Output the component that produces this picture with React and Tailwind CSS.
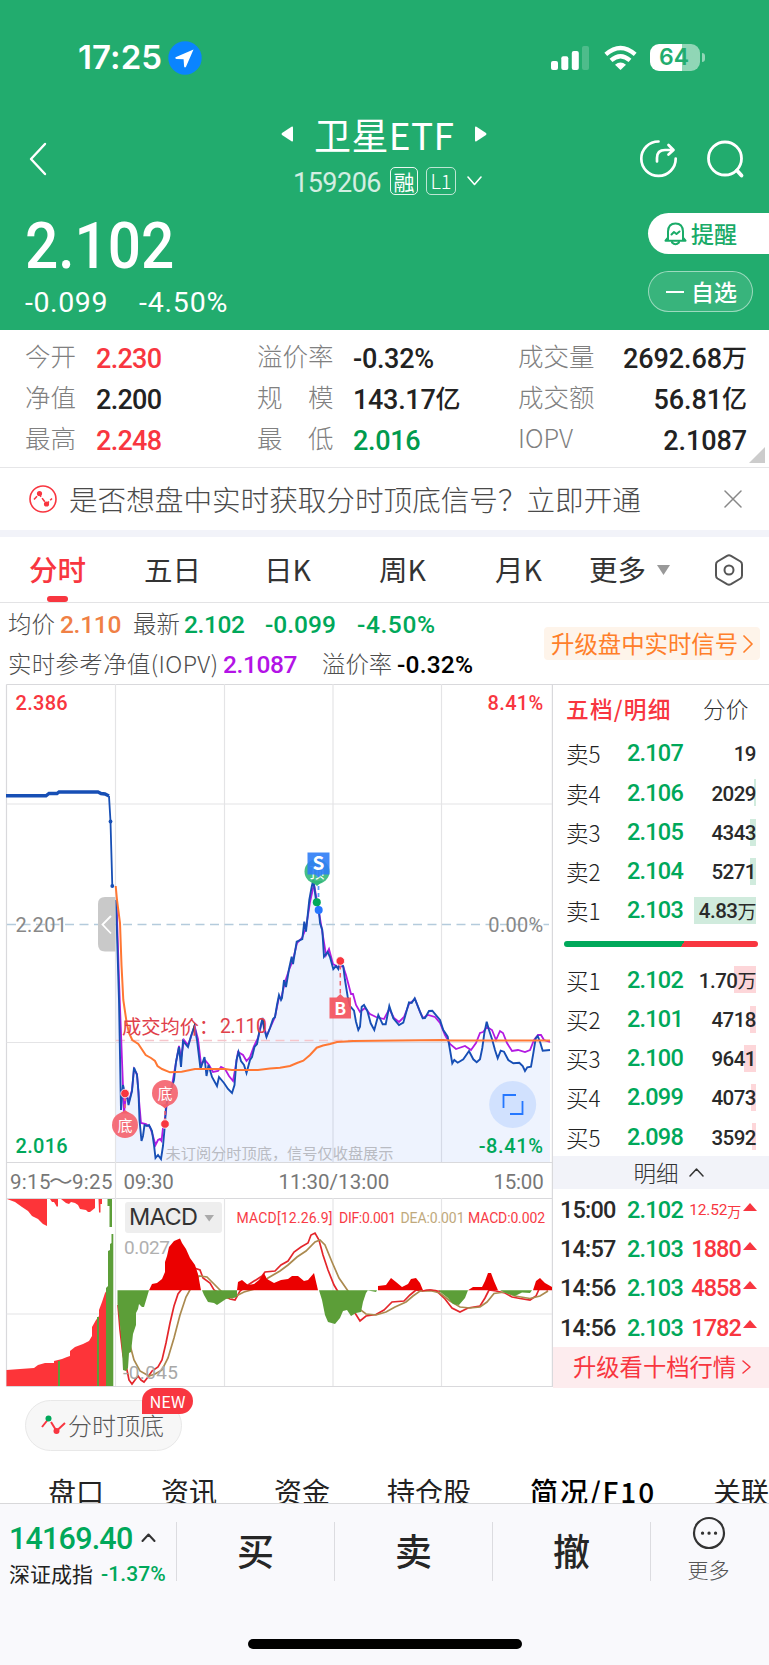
const stats = [
  ["今开", "2.230", "text-[#f83640]", "溢价率", "-0.32%", "text-[#222]", "成交量", "2692.68", "万"],
  ["净值", "2.200", "text-[#222]", "规　模", "143.17", "text-[#222]", "成交额", "56.81", "亿"],
  ["最高", "2.248", "text-[#f83640]", "最　低", "2.016", "text-[#009a4e]", "IOPV", "2.1087", ""],
];

const sells = [
  { label: "卖5", price: "2.107", vol: "19", bar: 0 },
  { label: "卖4", price: "2.106", vol: "2029", bar: 2.5 },
  { label: "卖3", price: "2.105", vol: "4343", bar: 6 },
  { label: "卖2", price: "2.104", vol: "5271", bar: 6.5 },
  { label: "卖1", price: "2.103", vol: "4.83", unit: "万", bar: 62 },
];

const buys = [
  { label: "买1", price: "2.102", vol: "1.70", unit: "万", bar: 22 },
  { label: "买2", price: "2.101", vol: "4718", bar: 6 },
  { label: "买3", price: "2.100", vol: "9641", bar: 12 },
  { label: "买4", price: "2.099", vol: "4073", bar: 5 },
  { label: "买5", price: "2.098", vol: "3592", bar: 4.5 },
];

const ticks = [
  ["15:00", "2.102", "12.52", "万"],
  ["14:57", "2.103", "1880", ""],
  ["14:56", "2.103", "4858", ""],
  ["14:56", "2.103", "1782", ""],
];

const PRICE =
  "123,1085 125,1093.5 127,1095 128.5,1105 132,1091 134,1067.5 137,1075 138.5,1092 139.5,1120 141.5,1141 143,1136 144.5,1125 147,1126 149,1125 152,1131 154,1145 155.5,1158 158,1155 161,1159 163,1146 165,1124 166,1106 168,1098 171,1090 174,1080 176,1062 179,1047 181,1067 183,1041 188,1047 191,1036 194.5,1026 197,1040 200.5,1069 204.5,1057 206.5,1076 208.5,1065 212,1077 217,1086 219,1077 224,1083 228,1089 232,1093 234.5,1085 236.5,1060 238.5,1052 241,1061 244,1065 246.5,1073 250,1060 252,1057 254.5,1047 257,1044 259.5,1031 262.5,1018 264,1028 266.5,1037 270,1028 273,1019 275,1017 277,1005 279,995 281,1000 282,998 284,980 286,987 289,969 291.7,956.7 293,964 296.7,941.7 302.3,939 304.3,921.7 306,931.7 309.3,900 311.7,886.7 313.3,880 316,900 318.7,908 320,923 322.3,930 324,956.7 327.7,952 330,957 333.3,969 336,966 338.3,969 340,961.7 343.3,966.7 345,980 347.7,996.7 350,1006 354,1010.7 356,1021.7 358.3,1030 360,1026.7 361.7,1006.7 364,1005 367.3,1010.7 370.7,1023.3 374.3,1030 378.3,1015 382.7,1024.3 385.7,1024.3 389.3,1006 393.3,1018.3 399,1025 403.3,1022.7 409,1002.3 411.7,1003 414.7,998.3 420,1011.7 422.7,1018.3 425,1018 429,1011 432.3,1010.7 440,1020 443.3,1030 447.7,1036.7 450,1050 452.3,1063.3 454.3,1060 457.7,1062.7 463.3,1059.3 469,1051 473.3,1059.3 476.7,1062.3 480,1059.3 482.3,1048 484.3,1033.3 486.7,1021.7 489,1030 492.3,1040 495,1050 497.7,1058.3 500.7,1050.7 504,1051.7 508.3,1060 513.3,1063.3 519.3,1062.7 522.7,1066 525,1071 527.3,1067.3 531,1066.7 533.3,1053.3 535.7,1038.3 537.7,1036 540,1041.7 542.7,1050.7 550,1050";

const IOPV =
  "116.5,900 119,980 122,1060 124,1113 126,1095 129,1101 132,1090 134,1069 137,1074 139,1100 141,1123 146,1124 150,1127 153,1136 155.5,1145 158,1140 160,1139 161.5,1141 163,1128 165,1118 168,1096 172,1085 175,1068 179,1046 181,1058 184,1040 188,1045 191,1037 194.5,1026 198,1039 201,1064 205,1060 209,1065 213,1072 218,1071 221,1067 225,1069 229,1076 233,1081 235,1070 238,1052 243,1055 246.5,1061 250,1057 254,1046 258,1038 262.5,1020 266.5,1036 271,1026 275,1017 279,997 281,999 285,982 289,970 293,960 297,943 302,938 306,928 310,902 314,884 318,907 322,930 326,955 329,949 333,964 338,967 343,966 346,975 351,994 353,994 356,1005 360,1012 365,1008 370,1014 376,1017 384,1019 389.3,1009 394,1018 399,1022 404,1017 409,1004 415,999 420,1012 423,1018 428,1015 435,1017 440,1023 445,1035 450,1044 456,1049 465,1046 471,1050 476,1043 480,1033 483,1032 487,1027 492,1030 496,1040 500,1031 503,1033 507,1043 512,1051 518,1050 525,1052 530,1050 534,1040 538,1035 541,1035 544,1040 550,1042";

const AVG =
  "115.7,886 117,900 120,923 121.5,965 123.3,1000 126.7,1023 129,1033 132.3,1040 138.3,1044 145.7,1055 151,1058 155,1061 157.5,1066 162,1069 170,1072.3 181.7,1071.7 195,1069 225,1069 232,1070 258,1070 270,1068.5 280,1067.7 290,1066 297,1063 303.3,1060.7 310,1055 316.7,1047.7 323,1045.5 330,1044 337,1042 353,1041 443,1040 450,1040.5 550,1040.5";

const Sans = "font-['Noto_Sans_CJK_SC',sans-serif]";

function Triangle({ className = "", d = "M0 0L12 8L0 16Z", w = 12, h = 16 }) {
  return (
    <svg className={className} width={w} height={h} viewBox={`0 0 ${w} ${h}`}>
      <path d={d} fill="currentColor" />
    </svg>
  );
}

function Chevron({ className = "", d, w, h, stroke = 1.8 }) {
  return (
    <svg className={className} width={w} height={h} viewBox={`0 0 ${w} ${h}`} fill="none" stroke="currentColor" strokeWidth={stroke}>
      <path d={d} strokeLinecap="round" strokeLinejoin="round" />
    </svg>
  );
}

function StatusBar() {
  return (
    <div className="flex h-[115px] items-center pl-[78px] pr-[64px]">
      <span className="w-[90px] font-['Inter'] text-[33px] font-semibold leading-none tracking-[0.1px]">17:25</span>
      <svg className="size-[34px]" viewBox="0 0 34 34">
        <circle cx="17" cy="17" r="16.7" fill="#0a84ff" />
        <path d="M25.5 8.5L7.5 16.2Q6.6 17.6 8.4 17.9L15.6 18.2L16.1 25.4Q16.8 27.2 18 25.8Z" fill="#fff" />
      </svg>
      <svg className="ml-auto" width="39" height="26" viewBox="0 0 39 26" fill="#fff">
        <rect x="0" y="16" width="7" height="9" rx="2" />
        <rect x="10.3" y="11.3" width="7" height="13.7" rx="2" />
        <rect x="20.8" y="6" width="7" height="19" rx="2" />
        <rect x="31" y="1" width="7" height="24" rx="2" opacity=".2" />
      </svg>
      <svg className="ml-[14px]" width="33" height="26" viewBox="0 0 33 26" fill="none" stroke="#fff" strokeWidth="4.3">
        <path d="M1.8 9.4Q16.500 -3.600 31.200 9.400" />
        <path d="M7 15.300Q16.500 7 26 15.300" />
        <path d="M16.500 25L11 19.700Q16.500 15.300 22 19.700Z" fill="#fff" stroke="none" />
      </svg>
      <div className="ml-[13px] flex h-[27px] w-[50px] items-center justify-center rounded-[9px] bg-linear-to-r from-white from-64% to-[#90d6b6] to-64% pr-0.5 font-['Inter'] text-[23px] font-semibold text-[#22ac6e]">
        64
      </div>
      <div className="ml-[2px] h-[9px] w-[3px] rounded-r-full bg-white/50" />
    </div>
  );
}

function Header() {
  return (
    <header className="h-[330px] bg-[#22ac6e] text-white">
      <StatusBar />
      <div className="flex h-[87px]">
        <Chevron className="ml-[29px] mt-[27px]" w={18} h={34} stroke={2.4} d="M16 2L2 17L16 32" />
        <div className="ml-[234px] w-[207px]">
          <div className="flex h-[38px] items-center">
            <Triangle d="M12 1.500Q12 0 10.500 .7L1 7Q0 8 1 9L10.500 15.300Q12 16 12 14.500Z" />
            <h1 className="ml-[21px] w-[161px] text-[37px] leading-none tracking-[0.4px]">卫星ETF</h1>
            <Triangle d="M0 1.500Q0 0 1.500 .7L11 7Q12 8 11 9L1.500 15.300Q0 16 0 14.500Z" />
          </div>
          <div className="flex items-center pt-[12px]">
            <span className="ml-[12px] mt-[5px] w-[97px] font-['Roboto'] text-[27px] leading-none tracking-[-0.5px] text-white/80">159206</span>
            <span className="flex size-[28px] items-center justify-center rounded-[5px] border border-white/90 text-[21px] leading-none">融</span>
            <span className="ml-2 flex h-[28px] w-[30px] items-center justify-center rounded-[5px] border border-white/70 text-[20px] font-light leading-none">L1</span>
            <Chevron className="ml-[11px]" w={15} h={10} stroke={1.600} d="M1 1L7.500 8.500L14 1" />
          </div>
        </div>
        <svg className="ml-[151px] mt-[24px]" width="40" height="40" viewBox="0 0 40 40" fill="none" stroke="#fff" strokeWidth="2.700" strokeLinecap="round" strokeLinejoin="round">
          <path d="M19.500 2.500A17.200 17.200 0 1 0 36.700 19.500" />
          <path d="M18 22.500V19Q18 11 26 11H33.500M29.500 6L34.500 11L29.500 15.500" />
        </svg>
        <svg className="ml-[27px] mt-[24px]" width="40" height="40" viewBox="0 0 40 40" fill="none" stroke="#fff" strokeWidth="2.800" strokeLinecap="round">
          <circle cx="19" cy="19.500" r="16.500" />
          <path d="M31 31.500L35.500 36.500" strokeWidth="3.800" />
        </svg>
      </div>
      <div className="flex h-[128px] justify-between font-['Roboto']">
        <div className="pl-[25px]">
          <div className="mt-[11px] h-[70px] w-[170px] origin-left scale-x-90 text-[65px] font-medium leading-[66px]">2.102</div>
          <div className="flex h-[40px] items-center text-[28.5px]">
            <span className="w-[114px] tracking-[0.6px]">-0.099</span>
            <span className="tracking-[0.8px]">-4.50%</span>
          </div>
        </div>
        <div className={`w-[121px] ${Sans}`}>
          <div className="mt-[11px] flex h-[41px] items-center rounded-l-full bg-white pl-[16px] text-[23px] font-medium text-[#1aab68]">
            <svg className="mr-[4px]" width="23" height="24" viewBox="0 0 23 24" fill="none" stroke="currentColor" strokeWidth="2" strokeLinecap="round" strokeLinejoin="round">
              <path d="M4 18V9.500Q4.300 1.500 11.500 1.500T19 9.500V18M1.500 18.700H21.500L19 15.500M1.500 18.700L4 15.500M8 20.500Q11.500 24 15 20.500M7.500 12.500L10 10L12.500 12L15.500 9.500" />
            </svg>
            提醒
          </div>
          <div className="mt-[17px] flex h-[41px] w-[105px] items-center rounded-full border border-white/50 bg-white/10 pl-[17px] text-[23px] font-medium">
            <span className="mr-[7px] h-[2px] w-[18px] bg-white" />
            自选
          </div>
        </div>
      </div>
    </header>
  );
}

function Stats() {
  return (
    <section className="relative h-[138px] border-b border-[#e6e6e8] pt-[6px]">
      {stats.map((r) => (
        <div key={r[0]} className="flex h-[41px] items-center text-[25.5px] font-light leading-none text-[#808080]">
          <span className="-mt-1 ml-[25px] w-[71px]">{r[0]}</span>
          <span className={`mt-[5px] w-[161px] font-['Roboto'] text-[27px] font-medium tracking-[-0.7px] ${r[2]}`}>{r[1]}</span>
          <span className="-mt-1 w-[96px]">{r[3]}</span>
          <span className={`mt-[5px] flex w-[165px] items-center font-['Roboto'] text-[27px] font-medium tracking-[-0.3px] ${r[5]}`}>
            {r[4]}
            {r[3] === "规　模" && <span className={`-mt-[5px] text-[25px] tracking-normal ${Sans}`}>亿</span>}
          </span>
          <span className="-mt-1">{r[6]}</span>
          <span className="ml-auto mr-[22px] mt-[5px] flex items-center font-['Roboto'] text-[27px] font-medium tracking-[-0.1px] text-[#222]">
            {r[7]}
            <span className={`-mt-[5px] text-[25px] tracking-normal ${Sans}`}>{r[8]}</span>
          </span>
        </div>
      ))}
      <Triangle className="absolute bottom-[4px] right-[4px] text-[#ccc]" w={16} h={16} d="M16 0V16H0Z" />
    </section>
  );
}

function Notice() {
  return (
    <section className="flex h-[69px] items-center border-b-[7px] border-[#f2f3f9] pl-[29px] pr-[27px]">
      <svg width="28" height="28" viewBox="0 0 28 28" fill="none" stroke="#f83640" strokeWidth="1.600">
        <circle cx="14" cy="14" r="13" />
        <path d="M5 14.500L10 9L17.500 19L23 13.500" strokeDasharray="4.500 1.800" />
        <circle cx="10.500" cy="8.500" r="1.800" fill="#f83640" />
        <circle cx="17.500" cy="19" r="1.800" fill="#f83640" />
      </svg>
      <span className="ml-[12px] text-[28.6px] font-light leading-none text-[#4a4a4a]">是否想盘中实时获取分时顶底信号？立即开通</span>
      <Chevron className="ml-auto text-[#888]" w={18} h={18} stroke={1.500} d="M1 1L17 17M17 1L1 17" />
    </section>
  );
}

function PeriodTabs() {
  return (
    <nav className="flex h-[66px] items-center border-b border-[#e3e3e5] text-[28.5px] leading-none text-[#333]">
      <span className="relative ml-[29px] w-[115px] font-medium text-[#f83640]">
        分时
        <i className="absolute -bottom-[18px] left-[18px] h-[6px] w-[21px] rounded-full bg-[#f83640]" />
      </span>
      <span className="w-[120px]">五日</span>
      <span className="w-[115px]">日K</span>
      <span className="w-[116px]">周K</span>
      <span className="w-[94px]">月K</span>
      <span className="w-[68px]">更多</span>
      <Triangle className="text-[#999]" w={13} h={10} d="M0 0H13L6.500 10Z" />
      <svg className="ml-[44px]" width="30" height="32" viewBox="0 0 30 32" fill="none" stroke="#555" strokeWidth="2" strokeLinejoin="round">
        <path d="M13 1.800Q15 .8 17 1.800L26.500 7.500Q28 8.500 28 10.500V21.500Q28 23.500 26.500 24.500L17 30.200Q15 31.200 13 30.200L3.500 24.500Q2 23.500 2 21.500V10.500Q2 8.500 3.500 7.500Z" />
        <circle cx="15" cy="16" r="4.500" />
      </svg>
    </nav>
  );
}

function ChartInfo() {
  return (
    <section className="flex h-[81px] items-center justify-between">
      <div className="pl-[8px] text-[23.4px] font-light leading-none text-[#4d4d4d]">
        <div className="flex h-[40px] items-center">
          <span className="w-[52px]">均价</span>
          <span className="mt-[4px] w-[73px] font-['Roboto'] text-[24.500px] font-medium tracking-[-0.3px] text-[#f08045]">2.110</span>
          <span className="w-[51px]">最新</span>
          <span className="mt-[4px] w-[81px] font-['Roboto'] text-[24.500px] font-medium tracking-[-0.4px] text-[#00a85a]">2.102</span>
          <span className="mt-[4px] w-[92px] font-['Roboto'] text-[24.500px] font-medium text-[#00a85a]">-0.099</span>
          <span className="mt-[4px] font-['Roboto'] text-[24.500px] font-medium tracking-[0.6px] text-[#00a85a]">-4.50%</span>
        </div>
        <div className="flex h-[40px] items-center">
          <span className="w-[215px] tracking-[0.4px]">实时参考净值(IOPV)</span>
          <span className="mt-[4px] w-[99px] font-['Roboto'] text-[24.500px] font-medium tracking-[-0.4px] text-[#b313e6]">2.1087</span>
          <span className="w-[75px]">溢价率</span>
          <span className="mt-[4px] font-['Roboto'] text-[24.500px] font-medium tracking-[0.2px] text-black">-0.32%</span>
        </div>
      </div>
      <button className="mr-[9px] flex h-[33px] w-[216px] items-center rounded bg-[#fef4ea] pl-[7px] text-[23.400px] leading-none text-[#ff7f2a]">
        升级盘中实时信号
        <Chevron className="ml-[5px]" w={10} h={18} stroke={1.700} d="M1 1L9 9L1 17" />
      </button>
    </section>
  );
}

function Signal({ x, y, tip, label }) {
  return (
    <g>
      <circle cx={x} cy={y} r="13" fill="#f4606c" fillOpacity=".9" />
      <path d={tip} fill="#f4606c" />
      <text x={x} y={y + 5.500} textAnchor="middle" fontSize="15" fill="#fff" className={Sans}>{label}</text>
    </g>
  );
}

function Charts() {
  return (
    <svg className="block" width="553" height="704" viewBox="0 684 553 704" fill="none">
      {/* grid */}
      <g stroke="#e4e4e6" strokeWidth="1.200">
        <path d="M6.500 684.500V1386.500M6.500 684.500H553M6.500 1162.500H553M6.500 1198.500H553M6.500 1386.500H553M552.400 684V1387" stroke="#d9d9dc" />
        <path d="M115.500 684V1386M6.500 804H552M6.500 1042.500H552M6.500 1314H552M224.500 684V1162M333 684V1162M441.500 684V1162M224.500 1198V1386M333 1198V1386M441.500 1198V1386" />
      </g>
      <polygon points={`116,1162 116,900 121,1110 ${PRICE} 550,1162`} fill="#3b78f0" fillOpacity=".085" />
      <path d="M7 924.500H549" stroke="#b4cbdc" strokeWidth="1.300" strokeDasharray="9 5.500" />
      <path d="M116 1040.500H353" stroke="#f6c5cb" strokeWidth="1.300" strokeDasharray="9 5.500" />
      <polyline points={IOPV} stroke="#b31be2" strokeWidth="1.800" />
      <polyline points={`116,900 119,1000 121,1110 ${PRICE}`} stroke="#174fb5" strokeWidth="1.900" />
      <polyline points={AVG} stroke="#ff7733" strokeWidth="2" />
      <polyline points="6,795.800 46,795.800 49,793.500 57,793.500 59,792 98,792 101,793.500 105,794 109,796" stroke="#174fb5" strokeWidth="3.400" />
      <polyline points="109,796 110.500,821.500 112.300,886" stroke="#174fb5" strokeWidth="1.800" />
      <circle cx="110.500" cy="821.500" r="1.900" fill="#174fb5" />
      <circle cx="112.300" cy="886" r="1.900" fill="#174fb5" />

      <path d="M115.500 897H105Q98 897 98 904V944Q98 951.500 105 951.500H115.500Z" fill="#c9c9c9" />
      <path d="M111 916L102.500 924.500L111 933.500" stroke="#fff" strokeWidth="1.800" />

      {/* signals */}
      <path d="M125 1097V1112M165 1104V1121" stroke="#f4606c" strokeWidth="1.500" strokeDasharray="4 3" />
      <Signal x={125} y={1125} label="底" tip="M120 1113.500L125 1110L130 1113.500Z" />
      <Signal x={165} y={1093} label="底" tip="M160 1104.500L165 1108.500L170 1104.500Z" />
      <circle cx="125" cy="1093.500" r="4.300" fill="#f83640" stroke="#fff" strokeWidth=".8" />
      <circle cx="165" cy="1124" r="4.300" fill="#f83640" stroke="#fff" strokeWidth=".8" />
      <circle cx="317" cy="871.500" r="12.500" fill="#32b87a" fillOpacity=".9" />
      <path d="M311 881L317 886L323 881Z" fill="#32b87a" />
      <text x="317" y="877.500" textAnchor="middle" fontSize="15" fill="#fff" className={Sans}>顶</text>
      <path d="M307.500 852.500H329.500V874.500H322L318.500 877.500L315 874.500H307.500Z" fill="#2f7df6" fillOpacity=".9" />
      <text x="318.500" y="870" textAnchor="middle" fontSize="19" fontWeight="700" fill="#fff" className={Sans}>S</text>
      <path d="M318.500 886V908" stroke="#5c9bfa" strokeWidth="1.800" strokeDasharray="4 3" />
      <circle cx="316.800" cy="902.300" r="4" fill="#00a85a" />
      <circle cx="318.700" cy="910" r="4" fill="#2577ff" />
      <path d="M340.300 965V995" stroke="#f4606c" strokeWidth="1.500" strokeDasharray="4.500 3.500" />
      <circle cx="340.300" cy="961" r="4.300" fill="#f83640" stroke="#fff" strokeWidth=".8" />
      <path d="M329.500 997.500H336.500L340.300 994L344 997.500H351V1018.500H329.500Z" fill="#f4545f" fillOpacity=".93" />
      <text x="340.300" y="1014.500" textAnchor="middle" fontSize="17.500" fontWeight="700" fill="#fff" className={Sans}>B</text>

      <circle cx="512.700" cy="1104.500" r="23.500" fill="#2577ff" fillOpacity=".14" />
      <path d="M503.500 1108V1095H516M522.500 1101V1114H510" stroke="#2577ff" strokeWidth="1.800" />

      {/* labels */}
      <g fontFamily="Roboto" fontSize="20" fontWeight="500" letterSpacing=".3">
        <text x="15.500" y="709.500" fill="#f83640">2.386</text>
        <text x="543.500" y="709.500" fill="#f83640" textAnchor="end">8.41%</text>
        <text x="15.500" y="932" fill="#888" fontWeight="400">2.201</text>
        <text x="543.500" y="931.500" fill="#888" fontWeight="400" textAnchor="end">0.00%</text>
        <text x="15.500" y="1153" fill="#00a85a">2.016</text>
        <text x="543.500" y="1153" fill="#00a85a" textAnchor="end" letterSpacing=".6">-8.41%</text>
        <g fill="#777" fontWeight="400" fontSize="20.500">
          <text x="10" y="1188.500">9:15</text>
          <text x="49" y="1188.500" textLength="24" lengthAdjust="spacingAndGlyphs" className={Sans}>～</text>
          <text x="72" y="1188.500">9:25</text>
          <text x="123.500" y="1188.500" letterSpacing="-.2">09:30</text>
          <text x="278.500" y="1188.500" textLength="111">11:30/13:00</text>
          <text x="543.500" y="1188.500" textAnchor="end" letterSpacing="-.2">15:00</text>
        </g>
      </g>
      <text x="122" y="1033.500" fontSize="19.300" fill="#e0404a" className={Sans}>成交均价：</text>
      <text x="220" y="1033" fontFamily="Roboto" fontSize="19.500" fill="#e0404a" textLength="47">2.110</text>
      <text x="165.500" y="1158.500" fontSize="15.200" fill="#b9bbc2" textLength="228" className={Sans}>未订阅分时顶底，信号仅收盘展示</text>

      {/* auction */}
      <path d="M7 1199L15 1202L22 1207L28 1211L32 1216L38 1219L43 1224L47 1226V1199ZM50 1199L52 1202L54 1202L57 1207L58 1206V1199ZM61 1199L66 1203L69 1204L71 1202L75 1203L78 1205L80 1209L86 1210L88 1212H90L95 1208V1199ZM98.500 1199H102V1204H100.500V1212.500H99Z" fill="#fd3439" />
      <path d="M107.500 1199H112V1227H109.500V1206H107.500Z" fill="#5c9e38" />
      <path d="M6.500 1386V1370L20 1369L34 1368L38 1365L45 1363L54 1363V1361L62 1359L67 1357L70 1356V1351L75 1347L83 1344L89 1341L92 1336V1327L96 1320L99 1316V1310L102 1302L105 1293L107 1290V1386Z" fill="#fd3439" />
      <path d="M58 1361H60V1386H58ZM97 1317H99V1386H97ZM106 1386V1288L108 1286V1251L110 1250V1244L111.500 1243V1234H113.300V1386Z" fill="#5c9e38" />

      {/* macd */}
      <text x="124" y="1253.500" fontFamily="Roboto" fontSize="19" fill="#b0b0b0" textLength="46">0.027</text>
      <polyline points="118,1305 120,1330 123,1355 127,1370 129,1380 132,1384 135,1380 138,1376 141,1380 144,1382 148,1377 152,1371 158,1367 162,1360 166,1343 170,1323 174,1306 178,1294 181,1290 186,1275 194,1268 200,1270 203,1278 210,1283 214,1290 224,1296 230,1299 235,1300 240,1291 248,1285 262,1276 265,1272 275,1271 281,1265 288,1261 294,1252 301,1247 308,1243 311,1235 315,1233 319,1240 323,1255 328,1270 334,1285 340,1295 350,1306 355,1313 360,1321 366,1316 376,1314.500 384,1310 392,1302 404,1301 410,1295 416,1290 421,1291 430,1290 437,1291.500 445,1299 452,1308 460,1312 468,1308 480,1306 485,1298 489,1290 496,1291 505,1293 512,1297 520,1298.500 530,1300 536,1296 540,1287 548,1290" stroke="#e4262b" strokeWidth="1.700" />
      <polyline points="130,1345 134,1360 140,1371 149,1376 155,1374 162,1370 168,1358 174,1338 180,1315 186,1297 191,1288 199,1276 207,1277 214,1284 222,1292 232,1298 244,1292 258,1288 268,1278 280,1271 288,1265 297,1257 306,1251 315,1242 320,1240 325,1245 332,1262 339,1278 348,1291 358,1308 366,1314 376,1315 386,1312 395,1307 406,1302 413,1296 420,1291 432,1291 440,1293 450,1301 460,1307 470,1308 480,1307 487,1302 494,1293.500 505,1292 515,1296 530,1298.500 540,1296 548,1291" stroke="#ab8a4f" strokeWidth="1.700" />
      <path d="M117.500 1290.300H149L147 1297L144 1307H142L139 1304L138 1309L136 1313V1325L133 1334L131 1352L129 1353L128 1368L126 1371L123 1370L122 1350L120 1325L117.500 1304ZM202 1290.300H237V1297L226 1299L220 1303L217 1305L214 1303L208 1302L204 1295ZM319 1290.300H368L366 1293L363 1302L361 1312L356 1313L351 1316L347 1310L343 1311L340 1318L335 1324L328 1322L325 1315L322 1300ZM367 1290.300L376 1292L377 1290.300ZM438 1290.300H468L465 1298L459 1305L453 1304L448 1298ZM500 1290.300H532L530 1293L522 1292.500L515 1296L507 1293.500Z" fill="#5c9e38" />
      <path d="M149 1290.300L152 1284L157 1283L162 1279L165 1272V1262L167 1256L169 1247L174 1241L180 1238.500L182 1243L186 1249L190 1258L195 1265L198 1274L201 1290.300ZM237 1290.300L238 1282L242 1280L248 1285L254 1284L259 1280L264 1273L267 1279L274 1283L281 1280L288 1279L292 1276L298 1276L304 1281L308 1280L314 1273L318 1290.300ZM378 1290.300V1286L386 1285L391 1278L396 1282L402 1287L408 1284L411 1279L416 1278L420 1283L423 1290.300ZM468 1290.300L473 1287L482 1287L485 1281L488 1273L491 1273L494 1281L498 1290.300ZM533 1290.300L536 1281L540 1278L545 1283L552 1287V1290.300Z" fill="#eb0000" />
      <path d="M422 1291Q432 1288.500 440 1291.500" stroke="#e4262b" strokeWidth="1.200" />
      <text x="123" y="1379" fontFamily="Roboto" fontSize="19" fill="#a8a8a8" textLength="55">-0.045</text>

      <rect x="125" y="1202" width="97" height="31" rx="3" fill="#eee" />
      <text x="129" y="1225" fontFamily="Inter" fontSize="23.500" fill="#333" textLength="69">MACD</text>
      <path d="M204.500 1215H214L209.200 1221.500Z" fill="#aaa" />
      <g fontFamily="Roboto" fontSize="14" fill="#f83b45">
        <text x="236.500" y="1223" textLength="96">MACD[12.26.9]</text>
        <text x="339" y="1223" textLength="57">DIF:0.001</text>
        <text x="400.500" y="1223" fill="#c0a97c" textLength="64">DEA:0.001</text>
        <text x="468" y="1223" textLength="77">MACD:0.002</text>
      </g>
    </svg>
  );
}

function BookRow({ row, color }) {
  return (
    <div className="flex h-[39.250px] items-center leading-none">
      <span className="w-[61px] text-[22.500px] font-light text-[#222]">{row.label}</span>
      <span className="mt-px w-[64px] font-['Roboto'] text-[23.500px] font-medium tracking-[-0.8px] text-[#00a85a]">{row.price}</span>
      <div className="relative flex h-[27px] flex-1 items-center justify-end font-['Roboto'] text-[20.500px] font-medium tracking-[-0.5px] text-[#2a2a2a]">
        <i className={`absolute right-0 h-full ${color}`} style={{ width: row.bar }} />
        <span className="relative mt-[2px]">{row.vol}</span>
        {row.unit && <span className={`relative text-[19px] font-normal ${Sans}`}>{row.unit}</span>}
      </div>
    </div>
  );
}

function OrderBook() {
  return (
    <aside className="h-[704px] w-[216px] border-t border-[#d9d9dc]">
      <div className="flex h-[48px] items-center pl-[13px] text-[22.700px] leading-none">
        <span className="w-[137px] font-medium tracking-[1.2px] text-[#f83640]">五档/明细</span>
        <span className="font-light text-[#333]">分价</span>
      </div>
      <div className="pl-[13px] pr-[13px] pt-px">
        {sells.map((r) => <BookRow key={r.label} row={r} color="bg-[#d0ebdd]" />)}
      </div>
      <div className="ml-[11px] mt-[11px] h-[6px] w-[194px] rounded-full bg-linear-120 from-[#00a85a] from-61% to-[#f83640] to-61%" />
      <div className="pl-[13px] pr-[13px] pt-[13px]">
        {buys.map((r) => <BookRow key={r.label} row={r} color="bg-[#fdd6d9]" />)}
      </div>
      <div className="-mt-[1px] mb-[1px] flex h-[33px] items-center justify-center bg-[#f2f3f9] pl-[15px] text-[22.500px] font-light leading-none text-[#333]">
        明细
        <Chevron className="ml-[10px]" w={15} h={9} stroke={1.500} d="M1 8L7.500 1L14 8" />
      </div>
      {ticks.map((t, i) => (
        <div key={i} className="flex h-[39.250px] items-center pl-[7px] pr-[12px] pt-[3px] font-['Roboto'] text-[23.500px] font-medium leading-none">
          <span className="w-[67px] tracking-[-0.8px] text-[#2a2a2a]">{t[0]}</span>
          <span className="w-[58px] tracking-[-0.8px] text-[#00a85a]">{t[1]}</span>
          {t[3] ? (
            <span className="ml-auto flex items-center text-[15.500px] font-normal tracking-[-0.2px] text-[#f83640]">
              {t[2]}
              <span className={`text-[14px] ${Sans}`}>{t[3]}</span>
            </span>
          ) : (
            <span className="ml-auto tracking-[-0.9px] text-[#f83640]">{t[2]}</span>
          )}
          <Triangle className="-mt-[8px] ml-[2px] text-[#f83640]" w={14} h={8} d="M7 0L14 8H0Z" />
        </div>
      ))}
      <div className="flex h-[41px] items-center bg-[#fdecee] pl-[20px] text-[23.300px] leading-none text-[#f83640]">
        升级看十档行情
        <Chevron className="ml-[6px]" w={9} h={14} stroke={1.500} d="M1 1L8 7L1 13" />
      </div>
    </aside>
  );
}

function SignalChip() {
  return (
    <div className="h-[78px] pl-[25px] pt-[12px]">
      <div className="relative flex h-[51px] w-[157px] items-center rounded-full border border-[#e8e8e8] bg-[#f7f7f7] pb-[2px] pl-[15px] text-[24px] font-light leading-none text-[#555]">
        <svg className="mr-[2px]" width="25" height="20" viewBox="0 0 25 20" fill="none" stroke="#f83640" strokeWidth="2">
          <path d="M1 12L7 4.500M10 7L15.500 16L24 8" />
          <circle cx="7.500" cy="3.500" r="3" fill="#00a85a" stroke="none" />
          <circle cx="15.500" cy="16" r="3" fill="#f83640" stroke="none" />
        </svg>
        分时顶底
        <span className="absolute -top-[13px] left-[116px] flex h-[26px] w-[51px] items-center justify-center rounded-full rounded-bl-[4px] bg-[#f83640] text-[16.500px] font-normal text-white">NEW</span>
      </div>
    </div>
  );
}

function BottomBar() {
  return (
    <footer className="h-[162px] border-t border-[#d8d8da] bg-[#f9f9fc]">
      <div className="flex h-[96px] items-center leading-none">
        <div className="w-[176px] pl-[9px] pt-[5px]">
          <div className="flex items-center font-['Roboto'] text-[30.500px] font-medium tracking-[-0.8px] text-[#00a85a]">
            <span className="w-[132px]">14169.40</span>
            <Chevron className="-mt-[4px] text-[#333]" w={15} h={9} stroke={2} d="M1.500 8L7.500 1.500L13.500 8" />
          </div>
          <div className="mt-[7px] flex items-center text-[21px] text-[#222]">
            <span className="w-[92px]">深证成指</span>
            <span className="mt-[3px] font-['Roboto'] text-[21px] font-medium tracking-[0.1px] text-[#00a85a]">-1.37%</span>
          </div>
        </div>
        {["买", "卖", "撤"].map((t) => (
          <button key={t} className="-mt-[2px] h-[59px] w-[158px] border-l border-[#dcdce0] pb-[2px] text-[37px] font-medium leading-none text-[#262626]">{t}</button>
        ))}
        <div className="-mt-[2px] h-[59px] border-l border-[#dcdce0]" />
        <div className="-mt-[8px] flex flex-1 flex-col items-center pr-[3px] text-[21px] font-light text-[#555]">
          <svg width="34" height="34" viewBox="0 0 34 34" fill="none">
            <circle cx="17" cy="17" r="15" stroke="#333" strokeWidth="2.200" />
            <path d="M10.500 17.200H10.600M17 17.200H17.100M23.500 17.200H23.600" stroke="#333" strokeWidth="3.200" strokeLinecap="round" />
          </svg>
          <span className="mt-[9px]">更多</span>
        </div>
      </div>
      <div className="mx-auto mt-[39px] h-[10px] w-[274px] rounded-full bg-black" />
    </footer>
  );
}

export default function App() {
  return (
    <div className={`h-[1665px] w-[769px] overflow-hidden bg-white ${Sans}`}>
      <Header />
      <Stats />
      <Notice />
      <PeriodTabs />
      <ChartInfo />
      <div className="flex h-[704px]">
        <Charts />
        <OrderBook />
      </div>
      <SignalChip />
      <nav className="flex h-[37px] items-start overflow-hidden whitespace-nowrap pl-[48px] text-[28px] leading-[50px] text-[#222]">
        <span className="w-[113px]">盘口</span>
        <span className="w-[113px]">资讯</span>
        <span className="w-[113px]">资金</span>
        <span className="w-[143px]">持仓股</span>
        <span className="w-[183px] font-medium tracking-[1.9px] text-black">简况/F10</span>
        <span>关联</span>
      </nav>
      <BottomBar />
    </div>
  );
}
